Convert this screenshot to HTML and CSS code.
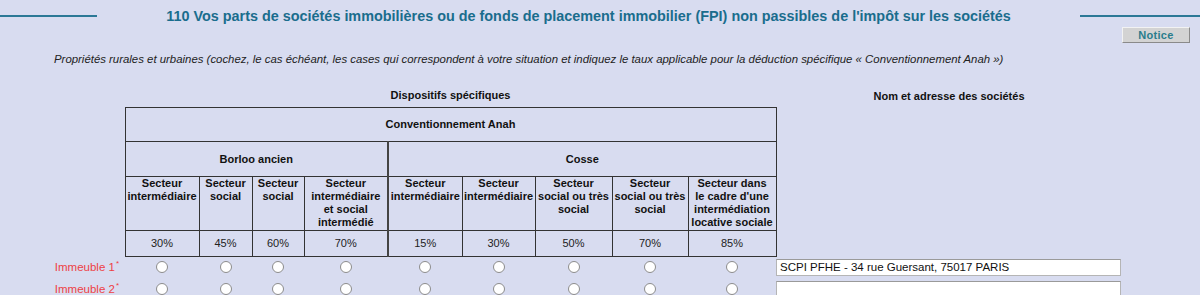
FILE: index.html
```html
<!DOCTYPE html>
<html lang="fr">
<head>
<meta charset="utf-8">
<title>110 Vos parts de sociétés immobilières</title>
<link rel="stylesheet" href="styles.css">
</head>
<body>
<header class="title-bar">
  <span class="rule rule-left"></span>
  <h1 class="title">110 Vos parts de sociétés immobilières ou de fonds de placement immobilier (FPI) non passibles de l'impôt sur les sociétés</h1>
  <span class="rule rule-right"></span>
</header>
<div class="toolbar"><button class="notice" type="button">Notice</button></div>
<p class="intro">Propriétés rurales et urbaines (cochez, le cas échéant, les cases qui correspondent à votre situation et indiquez le taux applicable pour la déduction spécifique « Conventionnement Anah »)</p>

<table class="grid">
  <colgroup>
    <col class="c-label">
    <col class="c1"><col class="c2"><col class="c3"><col class="c4">
    <col class="c5"><col class="c6"><col class="c7"><col class="c8"><col class="c9">
    <col class="c-name">
  </colgroup>
  <tr class="r-top">
    <td></td>
    <th colspan="9" class="plain">Dispositifs spécifiques</th>
    <th class="plain">Nom et adresse des sociétés</th>
  </tr>
  <tr class="r-anah">
    <td></td>
    <th colspan="9" class="box">Conventionnement Anah</th>
    <td></td>
  </tr>
  <tr class="r-group">
    <td></td>
    <th colspan="4" class="box">Borloo ancien</th>
    <th colspan="5" class="box split">Cosse</th>
    <td></td>
  </tr>
  <tr class="r-sect">
    <td></td>
    <th class="box sect">Secteur<br>intermédiaire</th>
    <th class="box sect">Secteur<br>social</th>
    <th class="box sect">Secteur<br>social</th>
    <th class="box sect">Secteur<br>intermédiaire<br>et social<br>intermédié</th>
    <th class="box sect split">Secteur<br>intermédiaire</th>
    <th class="box sect">Secteur<br>intermédiaire</th>
    <th class="box sect">Secteur<br>social ou très<br>social</th>
    <th class="box sect">Secteur<br>social ou très<br>social</th>
    <th class="box sect">Secteur dans<br>le cadre d'une<br>intermédiation<br>locative sociale</th>
    <td></td>
  </tr>
  <tr class="r-pct">
    <td></td>
    <td class="box pct">30%</td>
    <td class="box pct">45%</td>
    <td class="box pct">60%</td>
    <td class="box pct">70%</td>
    <td class="box pct split">15%</td>
    <td class="box pct">30%</td>
    <td class="box pct">50%</td>
    <td class="box pct">70%</td>
    <td class="box pct">85%</td>
    <td></td>
  </tr>
  <tr class="r-imm">
    <td class="label">Immeuble 1<sup>*</sup></td>
    <td class="rad"><input type="radio" name="i1"></td>
    <td class="rad"><input type="radio" name="i1"></td>
    <td class="rad"><input type="radio" name="i1"></td>
    <td class="rad"><input type="radio" name="i1"></td>
    <td class="rad"><input type="radio" name="i1"></td>
    <td class="rad"><input type="radio" name="i1"></td>
    <td class="rad"><input type="radio" name="i1"></td>
    <td class="rad"><input type="radio" name="i1"></td>
    <td class="rad"><input type="radio" name="i1"></td>
    <td class="name"><input class="field" type="text" value="SCPI PFHE - 34 rue Guersant, 75017 PARIS"></td>
  </tr>
  <tr class="r-imm">
    <td class="label">Immeuble 2<sup>*</sup></td>
    <td class="rad"><input type="radio" name="i2"></td>
    <td class="rad"><input type="radio" name="i2"></td>
    <td class="rad"><input type="radio" name="i2"></td>
    <td class="rad"><input type="radio" name="i2"></td>
    <td class="rad"><input type="radio" name="i2"></td>
    <td class="rad"><input type="radio" name="i2"></td>
    <td class="rad"><input type="radio" name="i2"></td>
    <td class="rad"><input type="radio" name="i2"></td>
    <td class="rad"><input type="radio" name="i2"></td>
    <td class="name"><input class="field" type="text" value=""></td>
  </tr>
</table>
</body>
</html>
```

FILE: styles.css
```css
html, body {
  margin: 0;
  padding: 0;
}
body {
  background: #d8dcf0;
  font-family: "Liberation Sans", Arial, sans-serif;
  color: #111;
  overflow: hidden;
}

.title-bar {
  display: grid;
  grid-template-columns: 97px 1fr 120px;
  align-items: center;
  height: 22px;
  padding-top: 5px;
}
.rule {
  display: block;
  height: 2px;
  background: #2b7896;
}
.title {
  margin: 0;
  text-align: center;
  font-size: 14.4px;
  font-weight: bold;
  color: #1a6d8d;
  line-height: 22px;
}

.toolbar {
  display: flex;
  justify-content: flex-end;
  height: 16px;
  padding-right: 10px;
}
.notice {
  width: 68px;
  height: 16px;
  padding: 0;
  margin: 0;
  background: #d3d3d3;
  border: 1px solid;
  border-color: #f2f2f2 #8a8a8a #8a8a8a #f2f2f2;
  font-family: "Liberation Sans", Arial, sans-serif;
  font-size: 11px;
  font-weight: bold;
  letter-spacing: 0.3px;
  color: #2a7d8c;
  line-height: 14px;
}

.intro {
  margin: 8px 0 0 54px;
  font-size: 11.4px;
  font-style: italic;
  line-height: 16px;
  color: #222;
}

.grid {
  margin-top: 17px;
  width: 1122px;
  table-layout: fixed;
  border-collapse: collapse;
  font-size: 11px;
}
.c-label { width: 125px; }
.c1 { width: 74px; }
.c2 { width: 53px; }
.c3 { width: 52px; }
.c4 { width: 84px; }
.c5 { width: 74px; }
.c6 { width: 73px; }
.c7 { width: 77px; }
.c8 { width: 76px; }
.c9 { width: 88px; }
.c-name { width: 346px; }

.grid th, .grid td {
  padding: 0;
}
.grid th {
  font-weight: bold;
  text-align: center;
  color: #111;
}
.box {
  border: 1px solid #333;
}
.split {
  border-left: 2px solid #444;
}

.r-top { height: 23px; }
.r-top th { vertical-align: middle; }
.r-anah { height: 34px; }
.r-group { height: 35px; }
.r-sect { height: 54px; }
.sect {
  vertical-align: top;
  line-height: 13px;
  padding-top: 1px;
  white-space: nowrap;
}
.r-pct { height: 26px; }
.pct {
  text-align: center;
  vertical-align: middle;
  color: #222;
  padding-top: 1px;
}

.r-imm { height: 22px; }
.label {
  text-align: right;
  color: #ee3f45;
  font-size: 11.5px;
  vertical-align: middle;
  white-space: nowrap;
}
.grid td.label {
  padding-right: 6px;
}
.label sup {
  font-size: 8px;
  vertical-align: 5px;
  line-height: 0;
  margin-left: 1px;
}
.rad {
  text-align: center;
  vertical-align: middle;
}
.rad input {
  appearance: none;
  -webkit-appearance: none;
  display: block;
  margin: 0 auto;
  width: 12px;
  height: 12px;
  border: 1px solid #8c8c8c;
  border-radius: 50%;
  background: #fff;
  box-sizing: border-box;
}
.name {
  vertical-align: middle;
  padding-left: 1px;
}
.field {
  display: block;
  box-sizing: border-box;
  width: 345px;
  height: 17px;
  margin: 0;
  padding: 0 3px;
  border: 1px solid #b5b5b5;
  border-top-color: #9a9a9a;
  background: #fff;
  font-family: "Liberation Sans", Arial, sans-serif;
  font-size: 11.5px;
  color: #111;
}
```
